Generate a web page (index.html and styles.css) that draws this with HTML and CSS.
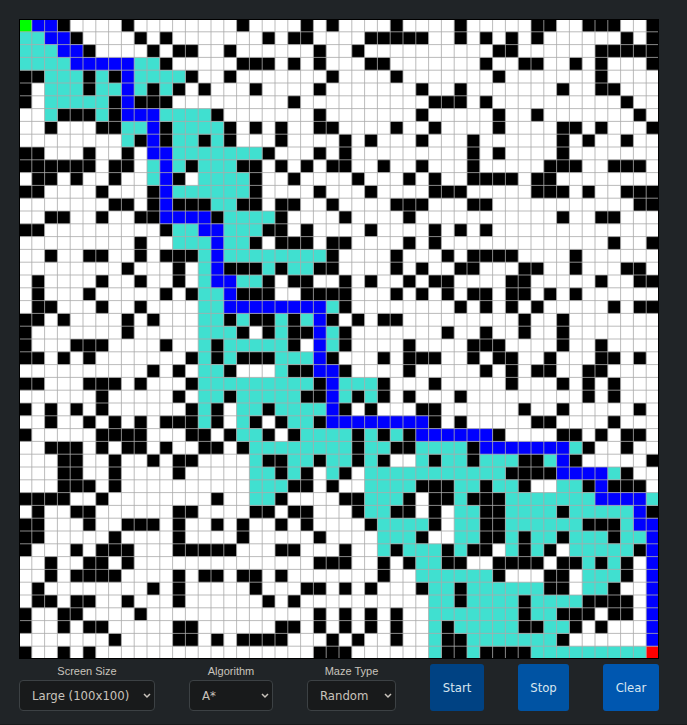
FILE: index.html
```html
<!DOCTYPE html>
<html lang="en">
<head>
<meta charset="utf-8">
<meta name="viewport" content="width=device-width, initial-scale=1">
<title>Pathfinding Visualizer</title>
<link rel="stylesheet" href="styles.css">
</head>
<body>
<main class="app">
  <svg class="board" id="board" viewBox="0 0 640 640" role="img" aria-label="Maze"></svg>
  <form class="controls">
    <div class="field">
      <label class="field-label" for="size">Screen Size</label>
      <div class="select-wrap">
        <select class="select select-size" id="size">
          <option>Small (25x25)</option>
          <option>Medium (50x50)</option>
          <option selected>Large (100x100)</option>
        </select>
        <svg class="chevron" viewBox="0 0 8 6" aria-hidden="true"><path d="M1 1l3 3 3-3"/></svg>
      </div>
    </div>
    <div class="field">
      <label class="field-label" for="algorithm">Algorithm</label>
      <div class="select-wrap">
        <select class="select select-algorithm" id="algorithm">
          <option selected>A*</option>
          <option>Dijkstra</option>
        </select>
        <svg class="chevron" viewBox="0 0 8 6" aria-hidden="true"><path d="M1 1l3 3 3-3"/></svg>
      </div>
    </div>
    <div class="field">
      <label class="field-label" for="maze">Maze Type</label>
      <div class="select-wrap">
        <select class="select select-maze" id="maze">
          <option selected>Random</option>
          <option>Empty</option>
        </select>
        <svg class="chevron" viewBox="0 0 8 6" aria-hidden="true"><path d="M1 1l3 3 3-3"/></svg>
      </div>
    </div>
    <button class="button button-start" type="button">Start</button>
    <button class="button button-stop" type="button">Stop</button>
    <button class="button button-clear" type="button">Clear</button>
  </form>
</main>
<script src="script.js"></script>
</body>
</html>
```
FILE: styles.css
```css
* {
  box-sizing: border-box;
}

body {
  margin: 0;
  min-height: 100vh;
  border-bottom: 1px solid #181a1b;
  background: #202427;
  color: #c8c3bc;
  font-family: "DejaVu Sans Condensed", "DejaVu Sans", sans-serif;
  font-stretch: condensed;
  font-size: 13px;
}

.app {
  padding: 19px 28px 13px 19px;
}

.board {
  display: block;
  width: 100%;
  background: #fff;
}

.wall { fill: #000; }
.visited { fill: #40e0d0; }
.route { fill: #00f; }
.start { fill: #0f0; }
.goal { fill: #f00; }

.grid-lines {
  fill: none;
  stroke: #aaa;
  stroke-opacity: 0.8;
}

.frame {
  fill: none;
  stroke: #000;
  stroke-width: 2;
}

.controls {
  display: flex;
  justify-content: space-between;
  align-items: flex-end;
  padding-top: 5px;
}

.field {
  display: flex;
  flex-direction: column;
  align-items: center;
  gap: 3px;
}

.field-label {
  font: 11px/12px "Liberation Sans", Arial, sans-serif;
}

.select-wrap {
  position: relative;
}

.select {
  display: block;
  height: 31px;
  padding: 0 12px;
  border: 1px solid #3c4144;
  border-radius: 4px;
  background: #181a1b;
  color: inherit;
  font: inherit;
  appearance: none;
}

.select-size { width: 136px; }
.select-algorithm { width: 84px; }
.select-maze { width: 89px; }

.chevron {
  position: absolute;
  right: 4px;
  top: 13px;
  width: 8px;
  height: 6px;
  fill: none;
  stroke: #c8c3bc;
  stroke-width: 1.5;
  pointer-events: none;
}

.button {
  height: 47px;
  padding: 0;
  border: 0;
  border-radius: 3px;
  color: #d8e6f0;
  font: inherit;
}

.button-start {
  width: 54px;
  background: #004283;
}

.button-stop {
  width: 51px;
  background: #0053a3;
}

.button-clear {
  width: 56px;
  background: #0057b0;
}
```
FILE: script.js
```js
// # wall, t visited, b route, S start, E goal, . open
const maze = [
  "Sbb#....#........ #....#.#....#.... #.....##..###..#",
  "ttbb#....#.#..... ..#.##....#####.. #.#.#.#......#.#",
  "tttbb#....#.##..# ......#..#....... ...##......#####",
  "ttttbbbbbtt#..... ###.#.#...##..... ..#..##..#.#...#",
  "##ttt#t#btttt#..# .......#....#.... ...#.......#....",
  "#.ttt#ttbt#t#.#.. .#....#.......#.. #.......#..##...",
  "#.ttttt#b###..... ....#..........## #.#..........#..",
  "..t###t#bbbtttt#. ......#.......#.. ...#..#.......#.",
  "..#...##ttb#tttt# .#.#..##....#..#. ...#....##.#...#",
  "........t#b#tt#t# ...#....#.#...#.. .#......#.#..#..",
  "##...#..#.bbttttt tt#...#.#........ .#.#....#.......",
  "######.##.tbt#ttt ##.#.#.##..#..#.. .#.....###..###.",
  ".##.#..#..tb#.ttt t#..#....#...#.#. .####.##........",
  "##....#...#bttttt t#....#...#....## #.....###.#..###",
  ".......##.#b###tt ##.##..#....###.. .##...........##",
  "..##..#..##bbbb#t ttt#....#....#... ........#..##...",
  "##.........#ttbbt tt##.#....#....#. #.#.............",
  ".........#..tttbt t#.###.##....#.#. ............#..#",
  "..#..##..#.###tbt ttttttt#....#...# .####....#......",
  "........#...#.tb# ##t#tt##....#.#.. ##...##..#...##.",
  ".#....#..#..#.tbb tt#.##..#.#..#.## ....##.....#..##",
  ".#...#.....#.#ttb ###..####...#.#.# .##.##.#.#......",
  ".##...#..#....ttb bbbbbbbt#........ #.#.#.#.....#.##",
  "##.#....#.#...tt# t##t#tb#.#.##.... .....#..#.......",
  "#.......#.....ttt #.#t##bt#.......# ..#..#..#.......",
  "#...###....#..t#t tttt#.bt#....#... .###....#..#....",
  "##.#.#.......#t#t ###tttb#...#.###. .#.##..#...##.#.",
  "..........#.#.tt# ...t##bb#....#... ..#.#.##..##....",
  "##...###.#...#ttt tttttt#bttt#...#. ....#...#.#.#...",
  "......#.....#.tt# ttttt##bt#t#.#... #.........#.#...",
  "#.#.#.#......#t#. tt#ttttb#.#...##. .....#..#.....#.",
  "..#..#.#.#.###t#. t#.#tt#bbbbbbbb#. #.....##....#...",
  "#.....####...##.# tt#.#tttt#t#t#bbb bbb#....##.#.##.",
  "..###.#.##.#..##. #tttttttt#tt##ttt t#bbbbbbbt#..#..",
  "...##..#..#.##... .t##tt#tt#t#..t#t t#ttt##tb#.....#",
  "...##..#....#.... .tt#t#.t#.ttttttt tttt####bbbbt#..",
  "...###.#......... .ttt##.#..tttt### tt#tt#..tt#b###.",
  "####..#........#. .tt#....##ttt#.## t###tttttttbbbbt",
  ".#..##......##... .##.##...#tt##.#. tt##tttt#tttttb#",
  "##...#..###.#..#. #..#.#....#tttt#. tt##tttttt###tbb",
  "##.....#....#.... #.....#....ttt#.. tt##t#tt#ttt#ttb",
  "#...#.###...##### ...##...#..t#ttt# t##.t#t#.ttttt#b",
  "..#..##.#........ ......###..#.#tt# #..####.##t#t#.b",
  "..#.####....#.##. ##.#.......#..ttt ttt#...##.ttt#.b",
  ".#........#.#.... .#...##.#.#...#tt #tttttt##.tt#..b",
  ".##.##..#...#.... ..#.#..........tt #tttt#tttt####.b",
  "#..##....#....... ......#.#.#.#..tt ttttt#tt###.##.b",
  "#..#.##.....##... ...##.#.#.#.#..t# ttttt##tt#.#...b",
  ".......#....##.#. ####...#.#..#..t# #ttttttt#......b",
  "#..#.#........... ......###......t# #t####tttttttttE",
].map((row) => row.replaceAll(" ", ""));

const classes = { "#": "wall", t: "visited", b: "route", S: "start", E: "goal" };
const extent = 640;
const cell = extent / maze.length;
const board = document.getElementById("board");

function addPath(className, d) {
  const path = document.createElementNS("http://www.w3.org/2000/svg", "path");
  path.setAttribute("class", className);
  path.setAttribute("d", d);
  board.append(path);
}

for (const [symbol, className] of Object.entries(classes)) {
  let d = "";
  maze.forEach((row, y) => {
    [...row].forEach((value, x) => {
      if (value === symbol) {
        d += `M${x * cell} ${y * cell}h${cell}v${cell}h${-cell}z`;
      }
    });
  });
  addPath(className, d);
}

let lines = "";
for (let i = 1; i < maze.length; i++) {
  lines += `M${i * cell} 0V${extent}M0 ${i * cell}H${extent}`;
}
addPath("grid-lines", lines);
addPath("frame", `M0 0H${extent}V${extent}H0z`);
```
